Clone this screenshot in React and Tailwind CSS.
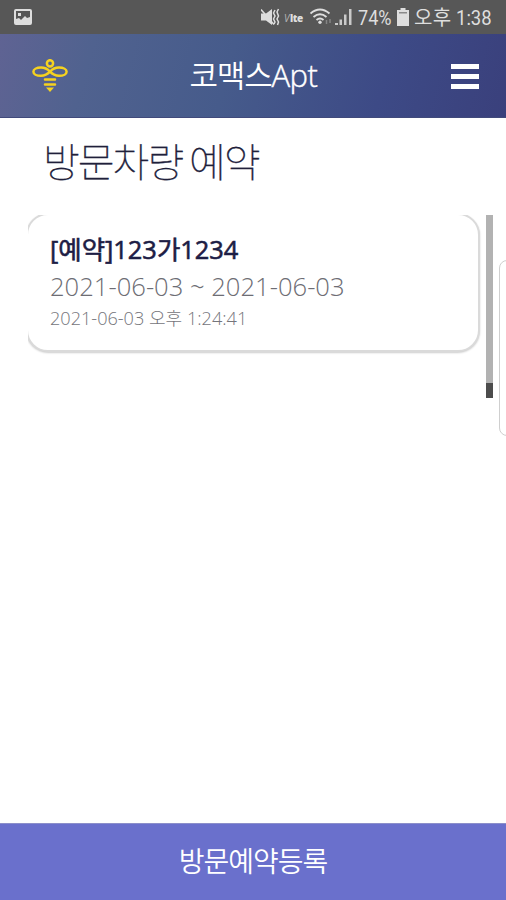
function StatusBar() {
  return (
    <div className="h-[34px] shrink-0 bg-[#575757] flex items-center text-[#dedede] pl-[14px] pr-[14px]">
      <svg width="18" height="16" viewBox="0 0 18 16">
        <rect x="1" y="1" width="16" height="14" rx="1" fill="#575757" stroke="#dedede" strokeWidth="2" />
        <path d="M2 14v-4l3-1 2 2 4-4 2 2 3-1v6z" fill="#dedede" />
        <rect x="4" y="4" width="3" height="3" fill="#dedede" />
      </svg>

      <div className="ml-auto flex items-center">
        <svg width="19" height="18" viewBox="0 0 19 18" fill="none" stroke="#dedede" className="-ml-[2px] mr-[2px]">
          <path d="M0 5.500h5L11 1v16l-6-4.500H0z" fill="#dedede" stroke="none" />
          <path d="M0 1.500l13 15" stroke="#dedede" strokeWidth="1.500" />
          <path d="M14 2l-1.500 3 1.500 3-1.500 3 1.500 3-1 2M17.500 1L16 4l1.500 4-1.500 3 1.500 3-1 3" strokeWidth="1.500" />
        </svg>
        <span className="ml-[2px] w-[23px] whitespace-nowrap font-['Open_Sans'] text-[10px] leading-none tracking-[-0.4px] pt-px">
          <i className="opacity-70 tracking-[-0.5px] mr-px">V</i>
          <b className="font-extrabold">lte</b>
        </span>
        <svg width="22" height="18" viewBox="0 0 22 18" fill="none" stroke="#dedede" strokeWidth="1.900" className="ml-[3px]">
          <path d="M0.500 5.500q9.500-8 19 0M3.500 9q6.500-5.500 13 0M6.500 12q3.500-3 7 0" />
          <circle cx="10" cy="14.300" r="1.700" fill="#dedede" stroke="none" />
          <path d="M16.500 12v4M20 11v4" stroke="#858585" strokeWidth="1.500" />
        </svg>
        <svg width="17" height="18" viewBox="0 0 17 18" fill="#dedede" className="ml-[3px]">
          <path d="M0 15h3v2H0zM4.500 11.500h2.500V17H4.500zM9 6.500h2.500V17H9zM14 1h2.500v16H14z" opacity=".85" />
        </svg>
        <span className="ml-[6px] w-[34px] whitespace-nowrap text-[21px] leading-none font-[Roboto] origin-left scale-x-[0.86] pt-[2px]">
          74%
        </span>
        <svg width="12" height="18" viewBox="0 0 12 18" fill="#dedede" className="ml-[5px]">
          <path d="M3.500 0h5v2H12v16H0V2h3.500z" />
          <path d="M2 4h8v1.500H2z" fill="#8a8a8a" />
        </svg>
        <span className="ml-[5px] w-[38px] whitespace-nowrap text-[20px] leading-[20px] tracking-[0.4px]">
          오후
        </span>
        <span className="ml-[4px] w-[36px] whitespace-nowrap text-[21px] leading-none font-[Roboto] origin-left scale-x-[0.88] pt-[2px]">
          1:38
        </span>
      </div>
    </div>
  );
}

function BeeLogo() {
  return (
    <svg width="36" height="33" viewBox="0 0 36 33" fill="none" stroke="#f6d21f" strokeWidth="2.500">
      <circle cx="18" cy="4.300" r="3.100" />
      <path d="M18 12.700C15 9.500 12 8.600 9 8.600c-4.500 0-7.600 1.700-7.600 4.100S4.500 16.800 9 16.800c3 0 6-.9 9-4.100 3-3.200 6-4.100 9-4.100 4.500 0 7.600 1.700 7.600 4.100s-3.100 4.100-7.600 4.100c-3 0-6-.9-9-4.100z" />
      <path d="M13 20.600h10M13 25.400h10" strokeLinecap="round" />
      <path d="M14 28.600h8L18 33z" fill="#f6d21f" stroke="none" />
    </svg>
  );
}

function Header() {
  return (
    <header className="h-[84px] shrink-0 flex items-center justify-between pl-[32px] pr-[27px] border-b border-[#414a7b] bg-[linear-gradient(105deg,#5f6393_0%,#50628f_18%,#465b8b_45%,#3d4a86_75%,#3a407c_100%)] text-white">
      <BeeLogo />
      <h1 className="w-[130px] -ml-[10px] -mt-[3px] whitespace-nowrap text-[31px] leading-[40px] tracking-[-1.2px]">
        <span className="font-[350]">코맥스</span>
        <span className="font-['Open_Sans'] font-light tracking-[-0.5px] [-webkit-text-stroke:0.4px_white]">Apt</span>
      </h1>
      <button className="flex flex-col gap-[5px] mt-px">
        <span className="w-[28px] h-[5px] bg-white" />
        <span className="w-[28px] h-[5px] bg-white" />
        <span className="w-[28px] h-[5px] bg-white" />
      </button>
    </header>
  );
}

function ReservationCard({ title, period, createdAt }) {
  return (
    <div className="-ml-[2px] -mt-[2px] w-[454px] h-[139px] rounded-[22px] border-2 border-[#dadada] bg-white shadow-[0_1px_2px_rgba(0,0,0,0.2)] pl-[22px] pt-[16px] whitespace-nowrap font-['Open_Sans','Noto_Sans_CJK_KR',sans-serif]">
      <p className="text-[25.4px] leading-[36px] font-normal text-[#1d1d45] [-webkit-text-stroke:0.6px_#1d1d45]">{title}</p>
      <p className="text-[25.6px] leading-[39px] font-light text-[#6d6d74]">{period}</p>
      <p className="text-[18.1px] leading-[24px] font-light text-[#75757b]">{createdAt}</p>
    </div>
  );
}

export default function App() {
  return (
    <div className="relative w-[506px] h-[900px] overflow-hidden flex flex-col bg-white font-['Noto_Sans_CJK_KR',sans-serif]">
      <StatusBar />
      <Header />

      <main className="flex-1">
        <h2 className="mt-[12px] ml-[43px] whitespace-nowrap text-[40px] leading-[60px] font-thin tracking-[-2px] text-[#20203a] [-webkit-text-stroke:0.35px_#20203a]">
          방문차량 예약
        </h2>
        <div className="mt-[25px] ml-[28px] flex justify-between w-[465px]">
          <div className="w-[456px] h-[183px] overflow-hidden">
            <ReservationCard
              title="[예약]123가1234"
              period="2021-06-03 ~ 2021-06-03"
              createdAt="2021-06-03 오후 1:24:41"
            />
          </div>
          <div className="w-[7px] h-[183px] bg-[#b2b2b2] flex flex-col justify-end">
            <div className="h-[15px] bg-[#4c4c4c]" />
          </div>
        </div>
      </main>

      {/* edge panel handle */}
      <div className="absolute left-[499px] top-[260px] w-[20px] h-[176px] rounded-[8px] border border-[#cfcfcf] bg-white" />

      <button className="h-[77px] shrink-0 bg-[#6a70cc] border-t border-[#8c8fca] text-white text-[28px] leading-[40px] font-[350] tracking-[-1px] pb-[5px]">
        방문예약등록
      </button>
    </div>
  );
}
